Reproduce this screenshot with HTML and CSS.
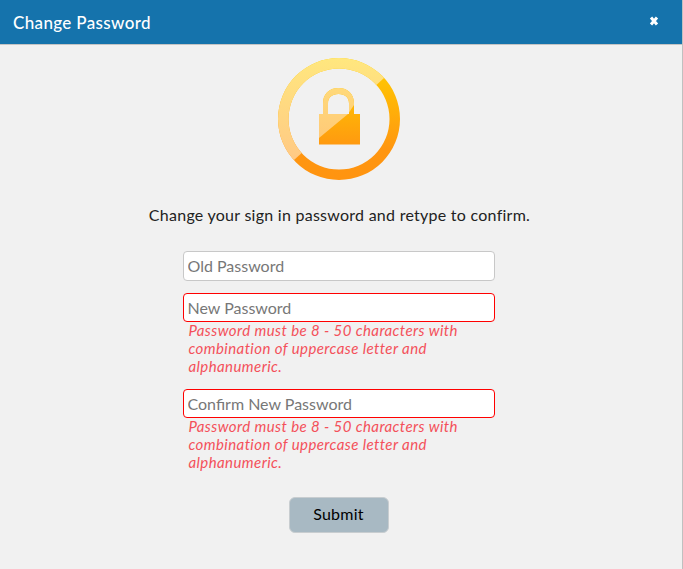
FILE: index.html
```html
<!DOCTYPE html>
<html lang="en">
<head>
<meta charset="utf-8">
<title>Change Password</title>
<link rel="stylesheet" href="styles.css">
</head>
<body>
<div class="dialog">
  <header class="titlebar">
    <h1 class="title">Change Password</h1>
    <span class="close">
      <svg width="10" height="10" viewBox="0 0 10 10"><path d="M2 1.500l6 7M8 1.500l-6 7" stroke="#fff" stroke-width="3" fill="none"/></svg>
    </span>
  </header>
  <main class="content">
    <svg class="lock" width="124" height="124" viewBox="0 0 124 124">
      <defs>
        <linearGradient id="warm" x1="0" y1="0" x2="0" y2="1"><stop offset="0" stop-color="#ffd000"/><stop offset=".75" stop-color="#ff9610"/><stop offset="1" stop-color="#ff9410"/></linearGradient>
        <linearGradient id="pale" x1="0" y1="0" x2="0" y2="1"><stop offset="0" stop-color="#ffe77e"/><stop offset="1" stop-color="#ffc386"/></linearGradient>
        <linearGradient id="body" gradientUnits="userSpaceOnUse" x1="0" y1="31" x2="0" y2="87"><stop offset="0" stop-color="#ffc400"/><stop offset="1" stop-color="#ff9a10"/></linearGradient>
        <linearGradient id="palebody" gradientUnits="userSpaceOnUse" x1="0" y1="31" x2="0" y2="87"><stop offset="0" stop-color="#ffd97a"/><stop offset="1" stop-color="#ffc878"/></linearGradient>
        <clipPath id="upper"><path d="M0 0H124V5.400L0 118.600Z"/></clipPath>
        <clipPath id="lockpale"><path d="M30 20H85L77 48 71 57 42 81 30 90Z"/></clipPath>
      </defs>
      <path fill="url(#warm)" fill-rule="evenodd" d="M62 1a61 61 0 1 0 0 122a61 61 0 1 0 0-122zM62 11.500a50.500 50.500 0 1 1 0 101a50.500 50.500 0 1 1 0-101z"/>
      <path clip-path="url(#upper)" fill="url(#pale)" fill-rule="evenodd" d="M62 1a61 61 0 1 0 0 122a61 61 0 1 0 0-122zM62 11.500a50.500 50.500 0 1 1 0 101a50.500 50.500 0 1 1 0-101z"/>
      <path fill="url(#body)" fill-rule="evenodd" d="M42 57H46V46.500C46 37 52 31 61.500 31S77 37 77 46.500V57H83V87.500H42ZM51 57H72V46.500C72 40.500 68 37 61.500 37S51 40.500 51 46.500Z"/>
      <path clip-path="url(#lockpale)" fill="url(#palebody)" fill-rule="evenodd" d="M42 57H46V46.500C46 37 52 31 61.500 31S77 37 77 46.500V57H83V87.500H42ZM51 57H72V46.500C72 40.500 68 37 61.500 37S51 40.500 51 46.500Z"/>
    </svg>
    <p class="intro">Change your sign in password and retype to confirm.</p>
    <form class="form">
      <div class="field"><input class="input" type="password" placeholder="Old Password"></div>
      <div class="field">
        <input class="input invalid" type="password" placeholder="New Password">
        <p class="error">Password must be 8 - 50 characters with combination of uppercase letter and alphanumeric.</p>
      </div>
      <div class="field">
        <input class="input invalid" type="password" placeholder="Confirm New Password">
        <p class="error">Password must be 8 - 50 characters with combination of uppercase letter and alphanumeric.</p>
      </div>
      <button class="submit" type="button">Submit</button>
    </form>
  </main>
</div>
</body>
</html>
```
FILE: styles.css
```css
* { box-sizing: border-box; }
html, body { margin: 0; height: 100%; overflow: hidden; }
body { background: #f1f1f1; font-family: Lato, sans-serif; }
.dialog { height: 569px; display: flex; flex-direction: column; border-right: 1px solid #c0c0c0; }
.titlebar { height: 45px; flex: none; background: #1573ac; border-bottom: 1px solid #c4c4c4; display: flex; align-items: center; justify-content: space-between; padding: 1px 23px 0 13px; }
.title { margin: 0; color: #fff; font-size: 17px; font-weight: 500; letter-spacing: .35px; }
.close { display: flex; margin-top: -3px; }
.content { display: flex; flex-direction: column; align-items: center; padding: 12px 5px 0 0; }
.lock { display: block; }
.intro { margin: 23px 0 0 2px; height: 22px; font-size: 16px; line-height: 22px; color: #222; letter-spacing: .26px; }
.form { width: 312px; margin-top: 25px; display: flex; flex-direction: column; align-items: center; }
.field { width: 100%; margin-bottom: 12px; }
.input { display: block; width: 100%; height: 30px; border: 1px solid #c8c8c8; border-radius: 4px; background: #fff; padding: 0 4px 2px; font: 16px Lato, sans-serif; outline: none; }
.input::placeholder { color: #777; opacity: 1; }
.invalid { height: 29px; border-color: #f00; padding-bottom: 0; }
.error { margin: -1px 0 2px; padding: 0 30px 0 6px; font-size: 15px; font-style: italic; line-height: 18px; color: #f4505a; letter-spacing: .41px; }
.submit { margin-top: 12px; width: 100px; height: 36px; padding: 0 0 3px; background: #a8b9c3; border: 1px solid #c8cdd0; border-radius: 6px; font: 16px Lato, sans-serif; letter-spacing: .25px; color: #000; }
```
